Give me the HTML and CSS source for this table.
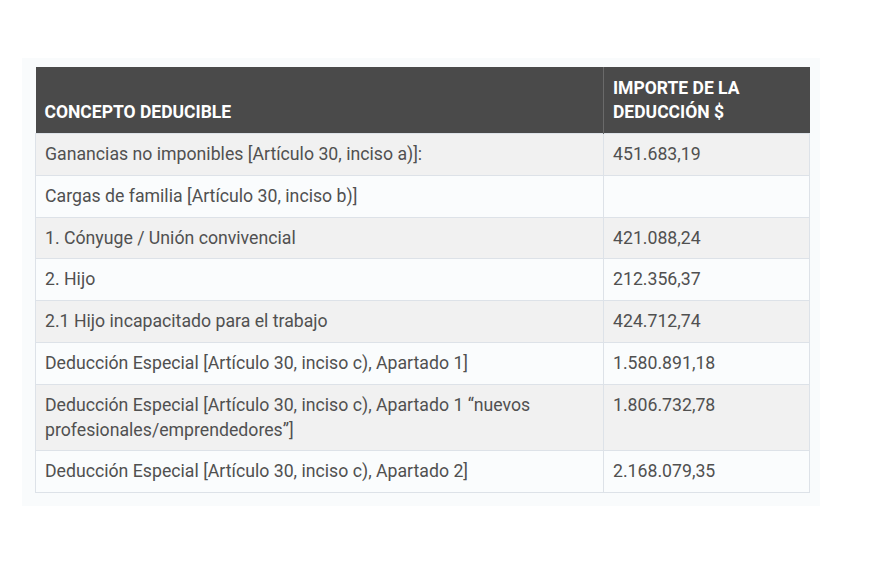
FILE: index.html
```html
<!DOCTYPE html>
<html lang="es">
<head>
<meta charset="utf-8">
<link rel="stylesheet" href="styles.css">
</head>
<body>
<div class="panel">
  <table class="deducciones">
    <thead>
      <tr>
        <th class="col-concepto">CONCEPTO DEDUCIBLE</th>
        <th class="col-importe">IMPORTE DE LA DEDUCCIÓN $</th>
      </tr>
    </thead>
    <tbody>
      <tr><td>Ganancias no imponibles [Artículo 30, inciso a)]:</td><td>451.683,19</td></tr>
      <tr><td>Cargas de familia [Artículo 30, inciso b)]</td><td></td></tr>
      <tr><td>1. Cónyuge / Unión convivencial</td><td>421.088,24</td></tr>
      <tr><td>2. Hijo</td><td>212.356,37</td></tr>
      <tr><td>2.1 Hijo incapacitado para el trabajo</td><td>424.712,74</td></tr>
      <tr><td>Deducción Especial [Artículo 30, inciso c), Apartado 1]</td><td>1.580.891,18</td></tr>
      <tr><td>Deducción Especial [Artículo 30, inciso c), Apartado 1 “nuevos profesionales/emprendedores”]</td><td>1.806.732,78</td></tr>
      <tr><td>Deducción Especial [Artículo 30, inciso c), Apartado 2]</td><td>2.168.079,35</td></tr>
    </tbody>
  </table>
</div>
</body>
</html>
```
FILE: styles.css
```css
html, body {
  margin: 0;
  padding: 0;
  background: #ffffff;
}
body {
  font-family: Roboto, "Liberation Sans", sans-serif;
  padding: 58px 0 0 22px;
}
.panel {
  width: 774px;
  padding: 9px 11px 13px 13px;
  background: #f9fbfc;
}
.deducciones {
  width: 774px;
  border-collapse: collapse;
  table-layout: fixed;
  font-size: 17.7px;
  line-height: 24.8px;
  color: #505050;
}
.deducciones th,
.deducciones td {
  box-sizing: border-box;
}
.col-concepto { width: 568px; }
.col-importe { width: 206px; }
.deducciones th {
  background: #4a4a4a;
  color: #ffffff;
  font-size: 17.5px;
  line-height: 24px;
  font-weight: 700;
  text-align: left;
  vertical-align: bottom;
  padding: 9px 9px 9px 9px;
  border-left: 1px solid #6a6a6a;
}
.deducciones th:first-child { border-left: none; }
.deducciones td {
  padding: 8px 9px 8px 9px;
  vertical-align: top;
  border: 1px solid #dde2e8;
}
.deducciones tbody tr:nth-child(odd) td { background: #f1f1f1; }
.deducciones tbody tr:nth-child(even) td { background: #fafcfd; }
```
